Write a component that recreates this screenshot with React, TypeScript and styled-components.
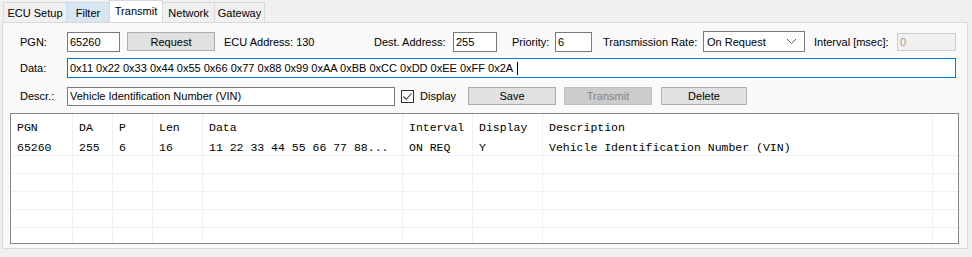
import React from "react";
import styled, { createGlobalStyle } from "styled-components";

const GlobalStyle = createGlobalStyle`
  html, body {
    margin: 0;
    padding: 0;
    background: #f0f0f0;
  }
  body {
    font-family: "Liberation Sans", Arial, sans-serif;
    font-size: 11px;
    color: #000;
  }
`;

interface Entry {
  pgn: string;
  da: string;
  p: string;
  len: string;
  data: string;
  interval: string;
  display: string;
  description: string;
}

const tabs = [
  { title: "ECU Setup", width: 64 },
  { title: "Filter", width: 44 },
  { title: "Transmit", width: 54 },
  { title: "Network", width: 53 },
  { title: "Gateway", width: 51 },
];

const columns = [
  { key: "pgn", title: "PGN", width: 62 },
  { key: "da", title: "DA", width: 40 },
  { key: "p", title: "P", width: 40 },
  { key: "len", title: "Len", width: 50 },
  { key: "data", title: "Data", width: 200 },
  { key: "interval", title: "Interval", width: 70 },
  { key: "display", title: "Display", width: 70 },
  { key: "description", title: "Description", width: 390 },
];

const entries: Entry[] = [
  {
    pgn: "65260",
    da: "255",
    p: "6",
    len: "16",
    data: "11 22 33 44 55 66 77 88...",
    interval: "ON REQ",
    display: "Y",
    description: "Vehicle Identification Number (VIN)",
  },
];

const EMPTY_ROWS = 5;

const ChevronDown = () => (
  <svg width="11" height="7" viewBox="0 0 11 7">
    <polyline points="1,1 5.5,5.5 10,1" fill="none" stroke="#606060" strokeWidth="1" />
  </svg>
);

const CheckMark = () => (
  <svg width="11" height="11" viewBox="0 0 11 11">
    <polyline points="1.5,5.5 4.3,8.3 9.5,2.5" fill="none" stroke="#333" strokeWidth="1.1" />
  </svg>
);

// Transmit tab of the J1939 tool window
const App: React.FC = () => {
  return (
    <Window>
      <GlobalStyle />
      <TabStrip>
        {tabs.map((t) => (
          <Tab
            key={t.title}
            $w={t.width}
            $selected={t.title === "Transmit"}
            $hover={t.title === "Filter"}
          >
            {t.title}
          </Tab>
        ))}
      </TabStrip>
      <Panel>
        <Row $mt={8} $h={21}>
          <Label $w={47}>PGN:</Label>
          <TextBox $w={53} defaultValue="65260" />
          <Button $w={88} $ml={7}>Request</Button>
          <Label $w={150} $ml={9}>ECU Address: 130</Label>
          <Label $w={79}>Dest. Address:</Label>
          <TextBox $w={44} defaultValue="255" />
          <Label $w={43} $ml={15}>Priority:</Label>
          <TextBox $w={37} defaultValue="6" />
          <Label $w={100} $ml={11}>Transmission Rate:</Label>
          <Select>
            <span>On Request</span>
            <ChevronDown />
          </Select>
          <Label $w={83} $ml={9}>Interval [msec]:</Label>
          <TextBox $w={59} $h={18} defaultValue="0" disabled />
        </Row>
        <Row $mt={5} $h={22}>
          <Label $w={47}>Data:</Label>
          <DataBox>
            0x11 0x22 0x33 0x44 0x55 0x66 0x77 0x88 0x99 0xAA 0xBB 0xCC 0xDD 0xEE 0xFF 0x2A
            <Caret />
          </DataBox>
        </Row>
        <Row $mt={7} $h={20}>
          <Label $w={47}>Descr.:</Label>
          <TextBox $w={328} $h={19} defaultValue="Vehicle Identification Number (VIN)" />
          <CheckLabel>
            <CheckBox>
              <CheckMark />
            </CheckBox>
            Display
          </CheckLabel>
          <Button $w={88} $h={18}>Save</Button>
          <Button $w={88} $h={18} $ml={8} disabled>
            Transmit
          </Button>
          <Button $w={86} $h={18} $ml={9}>Delete</Button>
        </Row>
        <Grid>
          <GridRow $header>
            {columns.map((c) => (
              <Cell key={c.key} $w={c.width}>
                {c.title}
              </Cell>
            ))}
            <Filler />
          </GridRow>
          {entries.map((e) => (
            <GridRow key={e.pgn}>
              {columns.map((c) => (
                <Cell key={c.key} $w={c.width}>
                  {e[c.key as keyof Entry]}
                </Cell>
              ))}
              <Filler />
            </GridRow>
          ))}
          {Array.from({ length: EMPTY_ROWS }).map((_, i) => (
            <GridRow key={i}>
              {columns.map((c) => (
                <Cell key={c.key} $w={c.width} />
              ))}
              <Filler />
            </GridRow>
          ))}
        </Grid>
      </Panel>
    </Window>
  );
};

const Window = styled.div`
  width: 972px;
  height: 257px;
  background: #f0f0f0;
  overflow: hidden;
`;

const TabStrip = styled.div`
  display: flex;
  align-items: flex-end;
  height: 22px;
  padding-left: 3px;
`;

const Tab = styled.div<{ $w: number; $selected?: boolean; $hover?: boolean }>`
  box-sizing: border-box;
  flex: none;
  width: ${(p) => p.$w}px;
  height: ${(p) => (p.$selected ? 22 : 20)}px;
  margin-left: -1px;
  display: flex;
  align-items: center;
  justify-content: center;
  padding-bottom: ${(p) => (p.$selected ? 2 : 0)}px;
  border: 1px solid ${(p) => (p.$hover ? "#c5dcf2" : "#d9d9d9")};
  border-bottom: none;
  background: ${(p) => (p.$selected ? "#ffffff" : p.$hover ? "#d8e6f2" : "#f0f0f0")};
  white-space: nowrap;
  &:first-child {
    margin-left: 0;
  }
`;

const Panel = styled.div`
  box-sizing: border-box;
  width: 966px;
  height: 227px;
  margin-left: 2px;
  border: 1px solid #d9d9d9;
  background: #f9f9f9;
  display: flex;
  flex-direction: column;
`;

const Row = styled.div<{ $mt: number; $h: number }>`
  display: flex;
  align-items: center;
  margin-top: ${(p) => p.$mt}px;
  height: ${(p) => p.$h}px;
  padding-left: 17px;
`;

const Label = styled.span<{ $w: number; $ml?: number }>`
  flex: none;
  width: ${(p) => p.$w}px;
  margin-left: ${(p) => p.$ml ?? 0}px;
  white-space: nowrap;
`;

const TextBox = styled.input<{ $w: number; $h?: number }>`
  flex: none;
  box-sizing: border-box;
  width: ${(p) => p.$w}px;
  height: ${(p) => p.$h ?? 20}px;
  padding: 0 2px;
  margin: 0;
  font: inherit;
  color: #000;
  background: #fff;
  border: 1px solid #7a7a7a;
  border-radius: 0;
  outline: none;
  &:disabled {
    background: #f0f0f0;
    border-color: #cccccc;
    color: #a0a0a0;
  }
`;

const DataBox = styled.div`
  flex: none;
  box-sizing: border-box;
  width: 889px;
  height: 20px;
  padding: 0 2px;
  display: flex;
  align-items: center;
  white-space: pre;
  background: #fff;
  border: 1px solid #0078d7;
`;

const Caret = styled.span`
  display: inline-block;
  width: 1px;
  height: 13px;
  margin-left: 4px;
  background: #000;
`;

const Button = styled.button<{ $w: number; $h?: number; $ml?: number }>`
  flex: none;
  box-sizing: border-box;
  width: ${(p) => p.$w}px;
  height: ${(p) => p.$h ?? 19}px;
  margin: 0 0 0 ${(p) => p.$ml ?? 0}px;
  padding: 0;
  font: inherit;
  color: #000;
  background: #e1e1e1;
  border: 1px solid #adadad;
  border-radius: 0;
  &:disabled {
    background: #cccccc;
    border-color: #bfbfbf;
    color: #838383;
  }
`;

const Select = styled.div`
  flex: none;
  box-sizing: border-box;
  width: 102px;
  height: 21px;
  display: flex;
  align-items: center;
  justify-content: space-between;
  padding: 0 7px 0 3px;
  background: #fff;
  border: 1px solid #7a7a7a;
`;

const CheckLabel = styled.label`
  flex: none;
  width: 67px;
  margin-left: 6px;
  display: flex;
  align-items: center;
  gap: 6px;
`;

const CheckBox = styled.span`
  box-sizing: border-box;
  width: 13px;
  height: 13px;
  display: flex;
  align-items: center;
  justify-content: center;
  background: #fff;
  border: 1px solid #333;
`;

const Grid = styled.div`
  box-sizing: border-box;
  width: 949px;
  height: 131px;
  margin: 7px 0 0 7px;
  background: #fff;
  border: 1px solid #828790;
  overflow: hidden;
  font-family: "Liberation Mono", "Courier New", monospace;
  font-size: 11.5px;
`;

const GridRow = styled.div<{ $header?: boolean }>`
  display: flex;
  box-sizing: border-box;
  height: ${(p) => (p.$header ? 24 : 18)}px;
  border-bottom: ${(p) => (p.$header ? "none" : "1px solid #f0f0f0")};
`;

const Cell = styled.div<{ $w: number }>`
  flex: none;
  box-sizing: border-box;
  width: ${(p) => p.$w}px;
  padding: 2px 0 0 6px;
  display: flex;
  align-items: center;
  border-right: 1px solid #f0f0f0;
  white-space: nowrap;
  overflow: hidden;
`;

const Filler = styled.div`
  flex: 1;
`;

export default App;
